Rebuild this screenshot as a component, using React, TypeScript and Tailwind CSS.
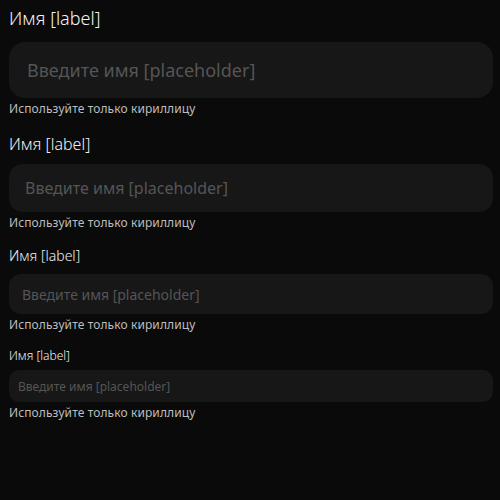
import React from "react";

type Size = {
  label: string;
  labelMb: string;
  input: string;
};

const sizes: Size[] = [
  {
    label: "text-[18px] leading-[28px]",
    labelMb: "mb-[10px]",
    input: "h-[56px] rounded-[16px] px-[18px] text-[18px]",
  },
  {
    label: "text-[16px] leading-[24px]",
    labelMb: "mb-[8px]",
    input: "h-[48px] rounded-[14px] px-[16px] text-[16px]",
  },
  {
    label: "text-[14px] leading-[20px]",
    labelMb: "mb-[8px]",
    input: "h-[40px] rounded-[12px] px-[13px] text-[14px]",
  },
  {
    label: "text-[12px] leading-[16px]",
    labelMb: "mb-[6px]",
    input: "h-[32px] rounded-[10px] px-[9px] text-[12px]",
  },
];

export default function App() {
  return (
    <div
      className="w-[500px] h-[500px] bg-[#0a0a0a] px-[9px] pt-[4px] flex flex-col gap-4"
      style={{ fontFamily: '"Noto Sans", "Open Sans", sans-serif' }}
    >
      {sizes.map((s, i) => (
        <div key={i} className="flex flex-col">
          <label className={`${s.label} ${s.labelMb} font-light text-[#f2f2f2]`}>Имя [label]</label>
          <input
            className={`${s.input} w-[484px] bg-[#171717] text-[#e5e5e5] placeholder:text-[#555555] outline-none`}
            placeholder="Введите имя [placeholder]"
          />
          <span className="mt-[3px] -mb-[1px] text-[12px] leading-[16px] tracking-[0.1px] text-[#bdbdbd]">
            Используйте только кириллицу
          </span>
        </div>
      ))}
    </div>
  );
}
